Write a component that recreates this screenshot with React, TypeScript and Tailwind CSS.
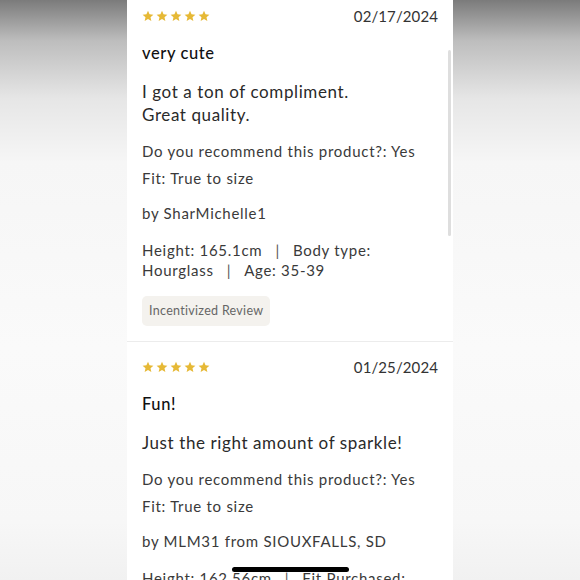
const FONT = { fontFamily: 'Lato, "Open Sans", sans-serif' }

function Stars() {
  return (
    <div className="flex items-center gap-[2px] h-5">
      {[0, 1, 2, 3, 4].map(i => (
        <svg key={i} width="12" height="12" viewBox="0 0 24 24">
          <path
            d="M12 1.5l3.1 7.1 7.7.7-5.8 5.1 1.7 7.6L12 18l-6.7 4 1.7-7.6-5.8-5.1 7.7-.7z"
            fill="#e6b936"
          />
        </svg>
      ))}
    </div>
  )
}

type Review = {
  date: string
  title: string
  body: string[]
  by: string
  meta: [string, string][]
  badge?: boolean
}

const REVIEWS: Review[] = [
  {
    date: '02/17/2024',
    title: 'very cute',
    body: ['I got a ton of compliment.', 'Great quality.'],
    by: 'by SharMichelle1',
    meta: [
      ['Height: 165.1cm', 'Body type:'],
      ['Hourglass', 'Age: 35-39'],
    ],
    badge: true,
  },
  {
    date: '01/25/2024',
    title: 'Fun!',
    body: ['Just the right amount of sparkle!'],
    by: 'by MLM31 from SIOUXFALLS, SD',
    meta: [['Height: 162.56cm', 'Fit Purchased:']],
  },
]

function ReviewCard({ r, first }: { r: Review; first: boolean }) {
  return (
    <div className={first ? 'px-[15px] pt-[6px] pb-[15px] border-b border-[#ececec]' : 'px-[15px] pt-[15px]'}>
      <div className="flex items-center justify-between">
        <Stars />
        <span className="text-[15px] leading-5 text-[#333] tracking-[0.1px]">{r.date}</span>
      </div>
      <div className="mt-4 text-[16.5px] leading-[22px] font-medium text-[#111] tracking-[0.6px]">{r.title}</div>
      <div className="mt-4 text-[17px] leading-[23px] text-[#2a2a2a] tracking-[0.6px]">
        {r.body.map(l => (
          <div key={l}>{l}</div>
        ))}
      </div>
      <div className="mt-[15px] text-[15px] leading-5 text-[#3a3a3a] tracking-[0.72px]">Do you recommend this product?: Yes</div>
      <div className="mt-[7px] text-[15px] leading-5 text-[#3a3a3a] tracking-[0.72px]">Fit: True to size</div>
      <div className="mt-[15px] text-[15px] leading-5 text-[#3a3a3a] tracking-[0.72px]">{r.by}</div>
      <div className="mt-[17px] text-[15px] leading-5 text-[#3a3a3a] tracking-[0.72px]">
        {r.meta.map(([a, b]) => (
          <div key={a} className="flex">
            <span>{a}</span>
            <span className="px-[13px] text-[#555]">|</span>
            <span>{b}</span>
          </div>
        ))}
      </div>
      {r.badge && (
        <div className="mt-4 inline-flex items-center h-[30px] px-[7px] rounded-[5px] bg-[#f4f2ee] text-[12.5px] text-[#666] tracking-[0.3px]">
          Incentivized Review
        </div>
      )}
    </div>
  )
}

export default function App() {
  return (
    <div className="w-[580px] h-[580px] overflow-hidden flex relative bg-white" style={FONT}>
      <div className="w-[127px] shrink-0 bg-[linear-gradient(to_bottom,#7b7b7b_0%,#bdbdbd_7%,#e6e6e6_17%,#f6f6f6_28%,#fafafa_60%,#f7f7f7_90%,#f1f1f1_100%)]" />
      <div className="w-[326px] shrink-0 bg-white relative">
        {REVIEWS.map((r, i) => (
          <ReviewCard key={r.date} r={r} first={i === 0} />
        ))}
        {/* scrollbar */}
        <div className="absolute right-[2px] top-[50px] w-[3px] h-[186px] rounded-full bg-[#dedede]" />
      </div>
      <div className="flex-1 bg-[linear-gradient(to_bottom,#7b7b7b_0%,#bdbdbd_7%,#e6e6e6_17%,#f6f6f6_28%,#fafafa_60%,#f7f7f7_90%,#f1f1f1_100%)]" />
      {/* home indicator */}
      <div className="absolute left-[232px] top-[567px] w-[117px] h-[5px] rounded-full bg-black" />
    </div>
  )
}
